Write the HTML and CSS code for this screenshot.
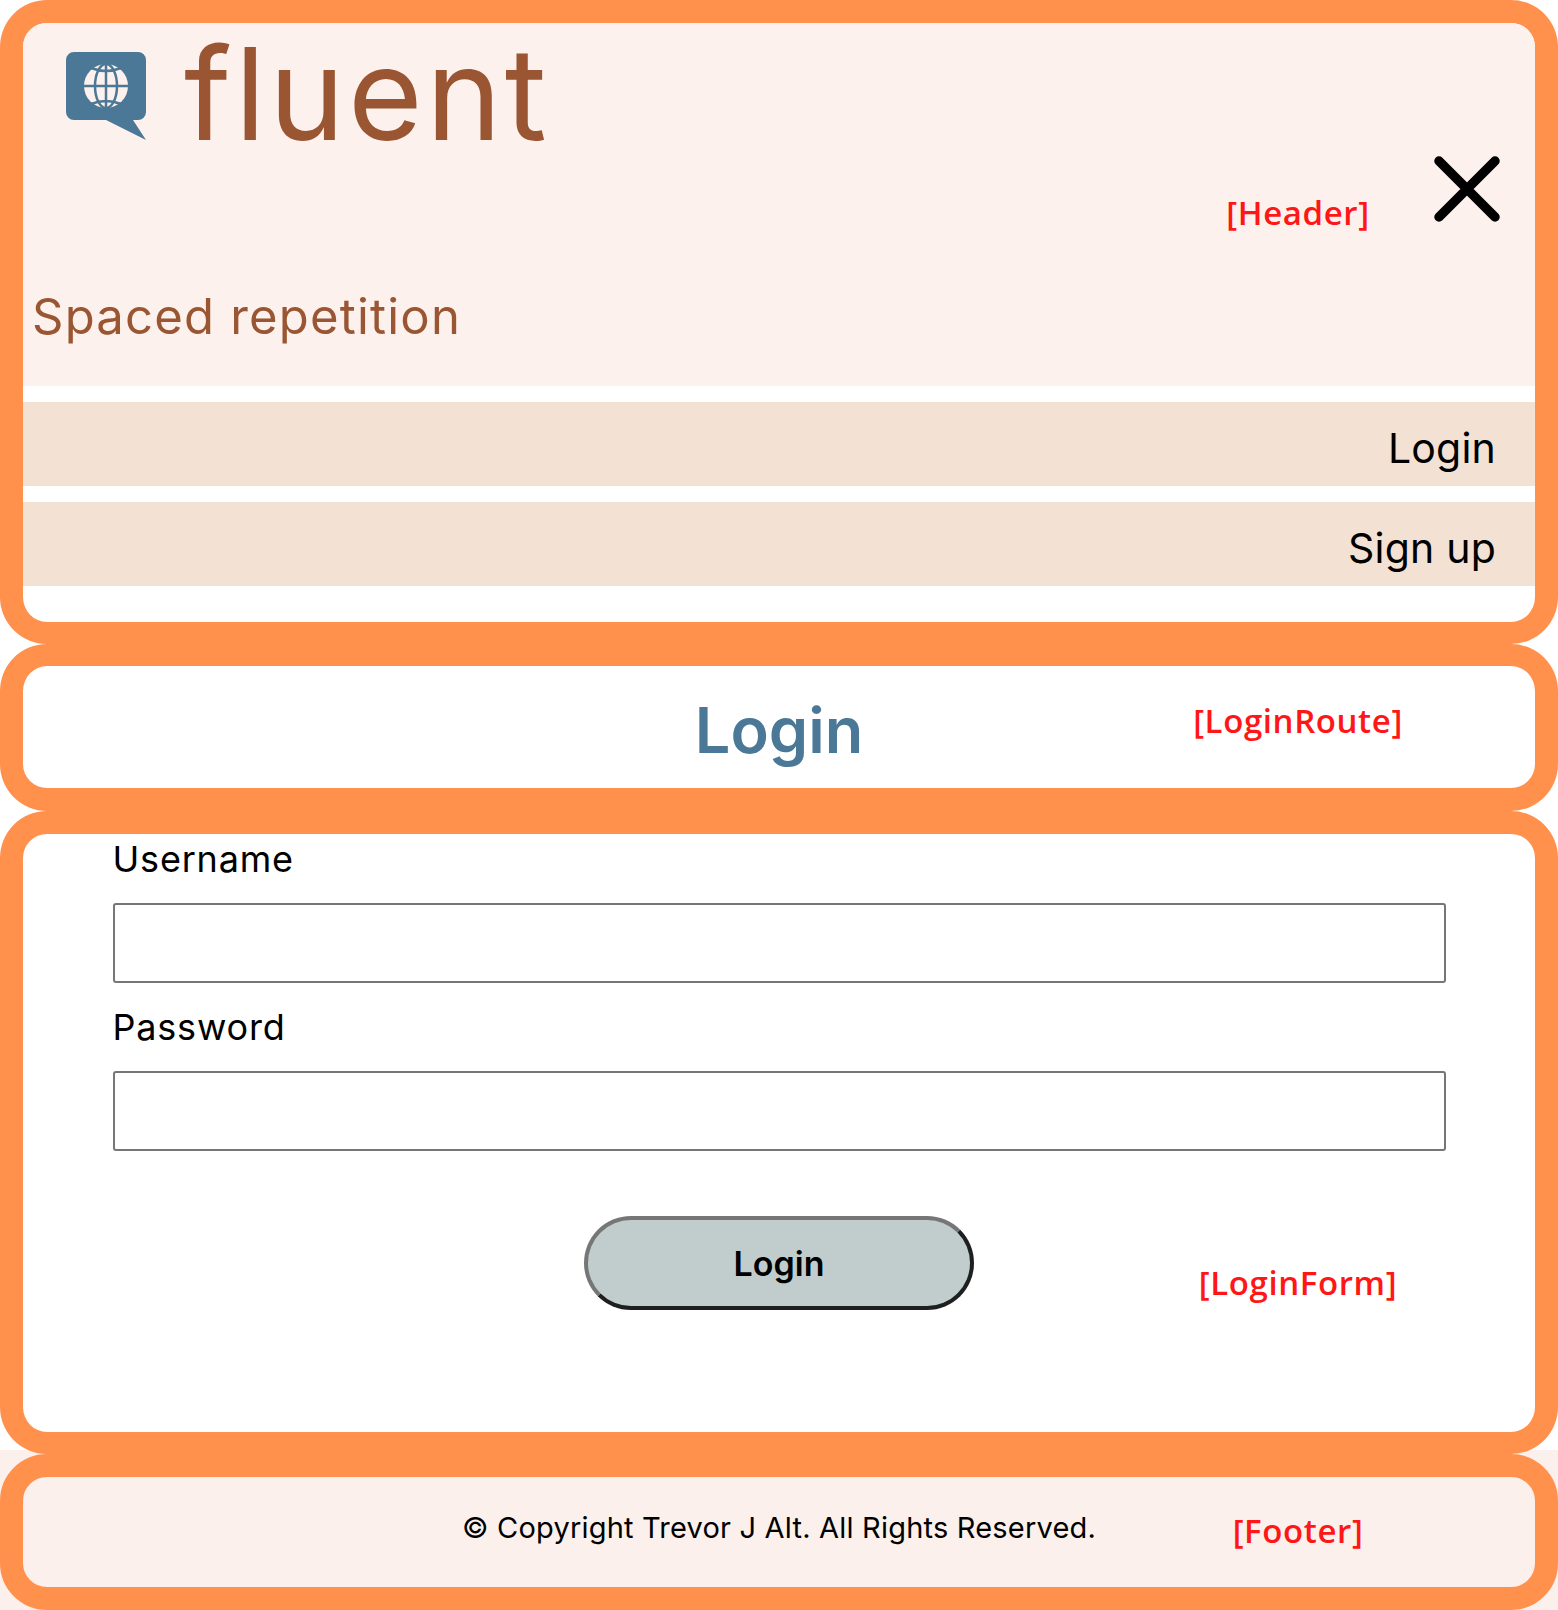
FILE: index.html
```html
<!DOCTYPE html>
<html lang="en">
<head>
    <meta charset="UTF-8">
    <meta name="viewport" content="width=device-width, initial-scale=1.0">
    <title>Fluent</title>
    <link rel="stylesheet" href="styles.css">
</head>
<body>
    <section class="debug-box header-box">
        <header class="header">
            <div class="brand-row">
                <svg class="logo" viewBox="0 0 80 88" aria-hidden="true">
                    <path class="logo-bubble" d="M8 0H72a8 8 0 0 1 8 8V60a8 8 0 0 1-8 8H67L80 88L40 68H8a8 8 0 0 1-8-8V8a8 8 0 0 1 8-8Z"/>
                    <circle class="logo-globe" cx="40" cy="34" r="22"/>
                    <g class="logo-lines">
                        <ellipse cx="40" cy="34" rx="11" ry="22"/>
                        <path d="M40 11V57M17 34H63M25 16Q40 22 55 16M25 52Q40 46 55 52"/>
                    </g>
                </svg>
                <span class="brand-name">fluent</span>
                <span class="debug-tag tag-header">[Header]</span>
                <svg class="close-icon" viewBox="0 0 66 66" aria-hidden="true">
                    <path d="M5 5L61 61M61 5L5 61"/>
                </svg>
            </div>
            <p class="tagline">Spaced repetition</p>
        </header>
        <nav class="nav">
            <a class="nav-link">Login</a>
            <a class="nav-link">Sign up</a>
        </nav>
    </section>

    <section class="debug-box route-box">
        <h1 class="route-title">Login</h1>
        <span class="debug-tag tag-route">[LoginRoute]</span>
    </section>

    <section class="debug-box form-box">
        <form class="login-form">
            <label class="field-label" for="username">Username</label>
            <input class="field-input" id="username" type="text">
            <label class="field-label" for="password">Password</label>
            <input class="field-input" id="password" type="password">
            <button class="login-button" type="button">Login</button>
        </form>
        <span class="debug-tag tag-form">[LoginForm]</span>
    </section>

    <div class="footer-wrap">
        <footer class="debug-box footer-box">
            <p class="copyright">© Copyright Trevor J Alt. All Rights Reserved.</p>
            <span class="debug-tag tag-footer">[Footer]</span>
        </footer>
    </div>
</body>
</html>
```

FILE: styles.css
```css
* {
    box-sizing: border-box;
}

body {
    margin: 0;
    font-family: 'Inter', 'Liberation Sans', sans-serif;
    background: #fff;
    color: #000;
}

/* orange outline round every component */
.debug-box {
    position: relative;
    border: solid #ff914d;
    border-width: 22px 23px;
    border-radius: 47px;
    background: #fff;
}

.debug-tag {
    position: absolute;
    left: 1275px;
    transform: translateX(-50%);
    font-family: 'Open Sans', sans-serif;
    font-size: 33px;
    font-weight: 600;
    line-height: 40px;
    letter-spacing: 0.6px;
    color: #ff1616;
    white-space: nowrap;
}

.tag-header { top: 170px; }
.tag-route { top: 35px; }
.tag-form { top: 429px; }
.tag-footer { top: 34px; }

.header-box {
    height: 644px;
    border-top-width: 23px;
}

.header {
    height: 363px;
    background: #fcf1ed;
    border-radius: 24px 24px 0 0;
}

.brand-row {
    display: flex;
    align-items: flex-start;
    height: 259px;
    padding: 29px 0 0 43px;
}

.logo {
    width: 80px;
    height: 88px;
    flex: none;
}

.logo-bubble {
    fill: #4b7896;
}

.logo-globe {
    fill: #fcf1ed;
}

.logo-lines {
    fill: none;
    stroke: #4b7896;
    stroke-width: 2.5;
}

.brand-name {
    margin: -36px 0 0 38px;
    font-size: 128px;
    line-height: 155px;
    font-weight: 400;
    letter-spacing: 3.3px;
    color: #9a5632;
}

.close-icon {
    position: absolute;
    top: 133px;
    left: 1411px;
    width: 66px;
    height: 66px;
    fill: none;
    stroke: #000;
    stroke-width: 9.5;
    stroke-linecap: round;
}

.tagline {
    margin: 0;
    padding-left: 9px;
    font-size: 49px;
    line-height: 70px;
    letter-spacing: 1.2px;
    color: #9a5632;
}

.nav {
    display: flex;
    flex-direction: column;
    gap: 16px;
    padding-top: 16px;
}

.nav-link {
    height: 84px;
    padding-right: 39px;
    background: #f3e1d4;
    font-size: 41px;
    line-height: 92px;
    letter-spacing: 0.2px;
    text-align: right;
}

.route-box {
    height: 167px;
    border-bottom-width: 23px;
    text-align: center;
}

.route-title {
    margin: 0;
    font-size: 63px;
    font-weight: 600;
    line-height: 128px;
    color: #4b7896;
}

.form-box {
    height: 643px;
    margin-bottom: -4px;
    border-top-width: 23px;
    z-index: 1;
}

.login-form {
    display: flex;
    flex-direction: column;
    margin-top: -1px;
    padding: 0 89.5px;
}

.field-label {
    height: 70px;
    font-size: 36px;
    line-height: 52px;
    letter-spacing: 0.8px;
}

.field-input {
    height: 80px;
    margin-bottom: 18px;
    border: 2px solid #767676;
    border-radius: 3px;
    background: #fff;
}

.login-button {
    align-self: center;
    width: 390px;
    height: 94px;
    margin-top: 47px;
    border: 4px solid;
    border-color: #767676 #1f1f1f #1f1f1f #767676;
    border-radius: 47px;
    background: #c1cdcd;
    font-family: inherit;
    font-size: 34px;
    font-weight: 600;
    color: #000;
}

.footer-wrap {
    height: 160px;
    padding-top: 4px;
    background: #fbf0ec;
}

.footer-box {
    height: 156px;
    border-width: 23px;
    background: #fbf0ec;
    text-align: center;
}

.copyright {
    margin: 0;
    font-size: 29px;
    line-height: 102px;
    letter-spacing: 0.2px;
}
```
